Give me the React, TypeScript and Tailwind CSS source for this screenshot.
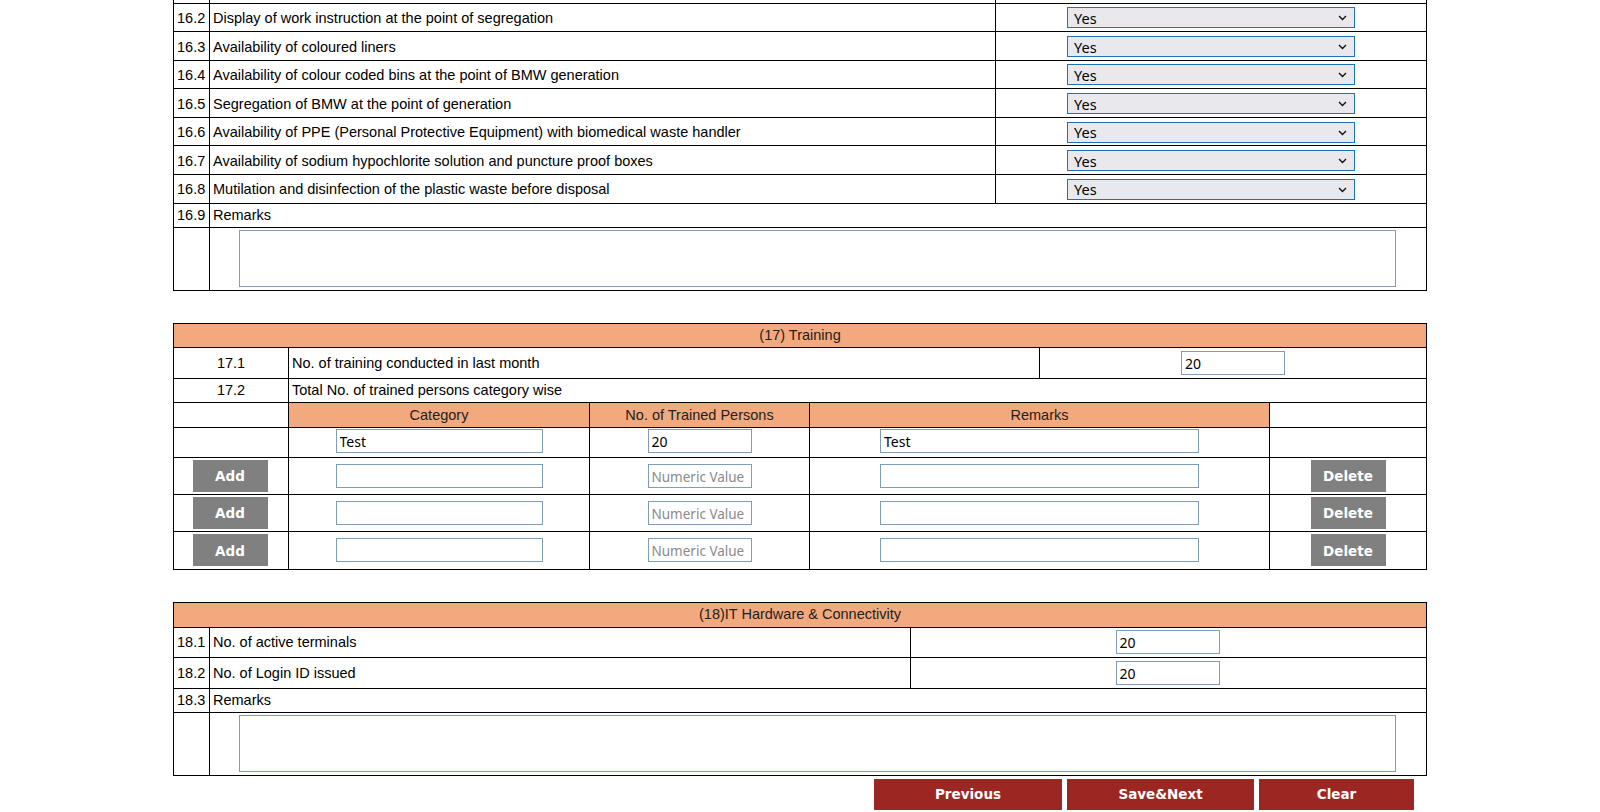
const labelFont = "font-['Liberation_Sans',Arial,sans-serif]";
const uiFont = "font-['Noto_Sans',sans-serif]";
const btnFont = "font-['DejaVu_Sans',Verdana,sans-serif]";

// 16.1 sits above the fold; only its bottom edge shows
const bmwRows = [
  ["", ""],
  ["16.2", "Display of work instruction at the point of segregation"],
  ["16.3", "Availability of coloured liners"],
  ["16.4", "Availability of colour coded bins at the point of BMW generation"],
  ["16.5", "Segregation of BMW at the point of generation"],
  ["16.6", "Availability of PPE (Personal Protective Equipment) with biomedical waste handler"],
  ["16.7", "Availability of sodium hypochlorite solution and puncture proof boxes"],
  ["16.8", "Mutilation and disinfection of the plastic waste before disposal"],
];

function YesSelect() {
  return (
    <div className="relative h-[21px] w-[288px]">
      <select
        defaultValue="Yes"
        className={`${uiFont} h-full w-full appearance-none border border-[#1b72b9] bg-[#e9e9ed] pl-[6px] pt-[1px] text-[14.5px] leading-none text-black outline-none`}
      >
        <option>Yes</option>
        <option>No</option>
      </select>
      <svg
        className="pointer-events-none absolute right-[8px] top-[8px]"
        width="9"
        height="6"
        viewBox="0 0 9 6"
      >
        <polyline points="1,1 4.5,4.5 8,1" fill="none" stroke="#111" strokeWidth="1.4" />
      </svg>
    </div>
  );
}

function TextInput({ value, width, placeholder }: { value?: string; width: string; placeholder?: string }) {
  return (
    <input
      type="text"
      defaultValue={value}
      placeholder={placeholder}
      className={`${uiFont} ${width} h-[24px] border border-[#7f9db9] bg-white px-[3px] pt-[1px] text-[14px] text-black outline-none placeholder:text-[13.5px] placeholder:text-[#8a8a8a]`}
    />
  );
}

function GrayButton({ label }: { label: string }) {
  return (
    <button className={`${btnFont} h-[32px] w-[75px] bg-[#808080] pt-[2px] text-[13.5px] font-bold text-white`}>
      {label}
    </button>
  );
}

export default function App() {
  return (
    <div className={`${labelFont} min-h-[812px] w-full overflow-hidden bg-white text-[14.5px] text-black`}>
      <div className="mx-auto -mt-[26px] w-[1254px]">
        {/* (16) Biomedical waste */}
        <div className="border border-black">
          {bmwRows.map(([no, text], i) => (
            <div key={i} className="flex h-[28.57px] border-b border-black">
              <div className="flex w-[36px] items-center border-r border-black pl-[3px] pt-[3px]">{no}</div>
              <div className="flex w-[786px] items-center border-r border-black pl-[3px] pt-[3px]">{text}</div>
              <div className="flex flex-1 items-center justify-center pt-px">
                <YesSelect />
              </div>
            </div>
          ))}
          <div className="flex h-[24px] border-b border-black">
            <div className="flex w-[36px] items-center border-r border-black pl-[3px] pt-[2px]">16.9</div>
            <div className="flex flex-1 items-center pl-[3px] pt-[2px]">Remarks</div>
          </div>
          <div className="flex h-[62px]">
            <div className="w-[36px] border-r border-black" />
            <div className="flex flex-1 items-center justify-center">
              <textarea className="mr-[2px] h-[57px] w-[1157px] resize-none border border-[#7f9db9] outline-none" />
            </div>
          </div>
        </div>

        {/* (17) Training */}
        <div className="mt-[32px] border border-black">
          <div className="flex h-[24px] items-center justify-center border-b border-black bg-[#f2a97e] pt-[2px] text-[#222]">
            (17) Training
          </div>
          <div className="flex h-[31px] border-b border-black">
            <div className="flex w-[115px] items-center justify-center border-r border-black pt-[2px]">17.1</div>
            <div className="flex w-[751px] items-center border-r border-black pl-[3px] pt-[2px]">
              No. of training conducted in last month
            </div>
            <div className="flex flex-1 items-center justify-center">
              <TextInput value="20" width="w-[104px]" />
            </div>
          </div>
          <div className="flex h-[24px] border-b border-black">
            <div className="flex w-[115px] items-center justify-center border-r border-black pt-[2px]">17.2</div>
            <div className="flex flex-1 items-center pl-[3px] pt-[2px]">Total No. of trained persons category wise</div>
          </div>
          <div className="flex h-[25px] border-b border-black text-[#222]">
            <div className="w-[115px] border-r border-black" />
            <div className="flex w-[301px] items-center justify-center border-r border-black bg-[#f2a97e] pt-[2px]">
              Category
            </div>
            <div className="flex w-[220px] items-center justify-center border-r border-black bg-[#f2a97e] pt-[2px]">
              No. of Trained Persons
            </div>
            <div className="flex w-[460px] items-center justify-center border-r border-black bg-[#f2a97e] pt-[2px]">
              Remarks
            </div>
            <div className="flex-1" />
          </div>
          <div className="flex h-[30px] border-b border-black">
            <div className="w-[115px] border-r border-black" />
            <div className="flex w-[301px] justify-center border-r border-black pt-[1px]">
              <TextInput value="Test" width="w-[207px]" />
            </div>
            <div className="flex w-[220px] justify-center border-r border-black pt-[1px]">
              <TextInput value="20" width="w-[104px]" />
            </div>
            <div className="flex w-[460px] justify-center border-r border-black pt-[1px]">
              <TextInput value="Test" width="w-[319px]" />
            </div>
            <div className="flex-1" />
          </div>
          {[0, 1, 2].map((i) => (
            <div key={i} className={`flex h-[37px] ${i < 2 ? "border-b border-black" : ""}`}>
              <div className="flex w-[115px] items-center justify-center border-r border-black pr-[2px]">
                <GrayButton label="Add" />
              </div>
              <div className="flex w-[301px] items-center justify-center border-r border-black">
                <TextInput width="w-[207px]" />
              </div>
              <div className="flex w-[220px] items-center justify-center border-r border-black">
                <TextInput width="w-[104px]" placeholder="Numeric Value" />
              </div>
              <div className="flex w-[460px] items-center justify-center border-r border-black">
                <TextInput width="w-[319px]" />
              </div>
              <div className="flex flex-1 items-center justify-center">
                <GrayButton label="Delete" />
              </div>
            </div>
          ))}
        </div>

        {/* (18) IT Hardware */}
        <div className="mt-[32px] border border-black">
          <div className="flex h-[25px] items-center justify-center border-b border-black bg-[#f2a97e] pt-[1px] text-[#222]">
            (18)IT Hardware &amp; Connectivity
          </div>
          {[
            ["18.1", "No. of active terminals"],
            ["18.2", "No. of Login ID issued"],
          ].map(([no, text]) => (
            <div key={no} className="flex h-[30.67px] border-b border-black">
              <div className="flex w-[36px] items-center border-r border-black pl-[3px] pt-[2px]">{no}</div>
              <div className="flex w-[701px] items-center border-r border-black pl-[3px] pt-[2px]">{text}</div>
              <div className="flex flex-1 items-center justify-center pr-[2px]">
                <TextInput value="20" width="w-[104px]" />
              </div>
            </div>
          ))}
          <div className="flex h-[24px] border-b border-black">
            <div className="flex w-[36px] items-center border-r border-black pl-[3px] pt-[2px]">18.3</div>
            <div className="flex flex-1 items-center pl-[3px] pt-[2px]">Remarks</div>
          </div>
          <div className="flex h-[62px]">
            <div className="w-[36px] border-r border-black" />
            <div className="flex flex-1 items-center justify-center">
              <textarea className="mr-[2px] h-[57px] w-[1157px] resize-none border border-[#7f9db9] outline-none" />
            </div>
          </div>
        </div>

        <div className={`${btnFont} mt-[3px] flex justify-end gap-[5px] pr-[13px] text-[13.5px] font-bold text-white`}>
          <button className="h-[31px] w-[188px] bg-[#9c2622]">Previous</button>
          <button className="h-[31px] w-[187px] bg-[#9c2622]">Save&amp;Next</button>
          <button className="h-[31px] w-[155px] bg-[#9c2622]">Clear</button>
        </div>
      </div>
    </div>
  );
}
